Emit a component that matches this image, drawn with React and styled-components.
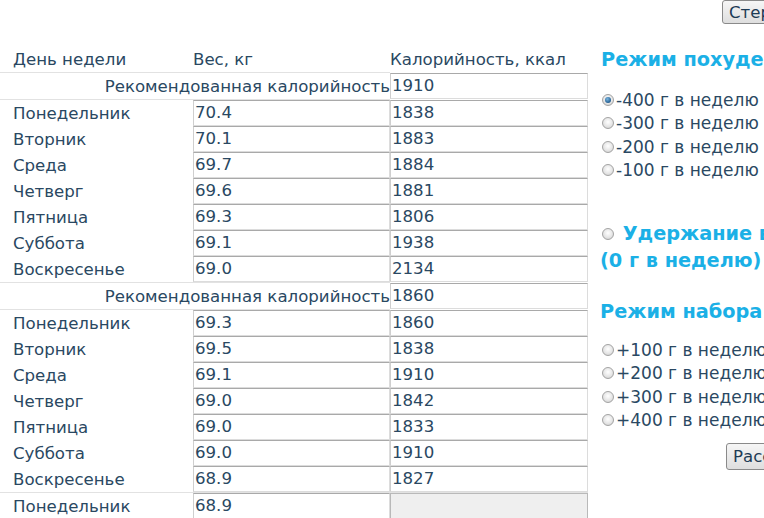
import React from "react";
import styled, { createGlobalStyle } from "styled-components";

const Global = createGlobalStyle`
  html, body { margin: 0; padding: 0; background: #fff; overflow: hidden; }
  body { font-family: "DejaVu Sans", Verdana, sans-serif; font-size: 16.6px; color: #2a4862; }
`;

const Page = styled.div`
  width: 764px;
  height: 518px;
  overflow: hidden;
`;

const TopBar = styled.div`
  display: flex;
  padding-left: 722px;
  height: 46px;
`;

const Button = styled.button`
  flex: none;
  height: ${(p) => p.$h || 24}px;
  padding: 0 6px;
  font-family: "DejaVu Sans", Verdana, sans-serif;
  font-size: 16.6px;
  color: #1d3b55;
  background: linear-gradient(#f6f6f6, #dedede);
  border: 1px solid #8a8a8a;
  border-radius: 3px;
  white-space: nowrap;
`;

const Main = styled.div`
  display: flex;
  gap: 12px;
  width: 900px;
`;

const Table = styled.table`
  border-collapse: collapse;
  border-spacing: 0;
  width: 588px;
  flex: none;
  table-layout: fixed;
`;

const Col = styled.col`
  width: ${(p) => p.$w}px;
`;

const HeadCell = styled.th`
  text-align: left;
  font-weight: normal;
  height: 26px;
  padding: 0 0 0 ${(p) => p.$pl ?? 0}px;
  vertical-align: middle;
  white-space: nowrap;
`;

const Row = styled.tr`
  height: 26px;
`;

const DayCell = styled.td`
  padding: 0 0 0 13px;
  height: 26px;
  white-space: nowrap;
  border-top: ${(p) => (p.$top ? "1px solid #e2e2e2" : "none")};
`;

const RecCell = styled.td`
  text-align: right;
  padding: 0;
  height: 26px;
  border-top: 1px solid #e2e2e2;
  border-bottom: 1px solid #e2e2e2;
  white-space: nowrap;
`;

const InputCell = styled.td`
  padding: 0;
  height: 26px;
  border-top: ${(p) => (p.$top ? "1px solid #e2e2e2" : "none")};
`;

const Field = styled.div`
  box-sizing: border-box;
  width: 100%;
  height: 26px;
  line-height: 24px;
  padding-left: 1px;
  border: 1px solid #dcdcdc;
  border-top-color: #a9a9a9;
  border-left-color: #cfcfcf;
  background: ${(p) => (p.$disabled ? "#efefef" : "#fff")};
  ${(p) => p.$disabled && "border-color: #b9b9b9;"}
  white-space: nowrap;
`;

const Panel = styled.div`
  flex: none;
  width: 260px;
  display: flex;
  flex-direction: column;
`;

const Heading = styled.div`
  font-weight: bold;
  font-size: 19.3px;
  color: #1bb0e6;
  line-height: 27px;
  margin: ${(p) => p.$m || "0"};
  white-space: nowrap;
`;

const Options = styled.div`
  display: flex;
  flex-direction: column;
  margin: ${(p) => p.$m || "0"};
  font-size: 17px;
`;

const Option = styled.label`
  display: flex;
  align-items: center;
  height: 23.5px;
  white-space: nowrap;
`;

const Radio = styled.span`
  box-sizing: border-box;
  display: inline-block;
  flex: none;
  width: 12px;
  height: 12px;
  margin: 0 2px 0 2px;
  border-radius: 50%;
  border: 1px solid #a3a3a3;
  background: radial-gradient(circle at 50% 40%, #ffffff 0%, #e6e6e6 55%, #c9c9c9 100%);
  position: relative;
  vertical-align: middle;
  &::after {
    content: "";
    display: ${(p) => (p.$checked ? "block" : "none")};
    position: absolute;
    left: 2px;
    top: 2px;
    width: 6px;
    height: 6px;
    border-radius: 50%;
    background: radial-gradient(circle at 40% 35%, #7ab6e0 0%, #245f92 70%, #1b3f63 100%);
  }
`;

const HoldLine = styled.div`
  display: flex;
  align-items: center;
  white-space: nowrap;
`;

const ButtonRow = styled.div`
  display: flex;
  padding-left: 126px;
  margin-top: 11px;
`;

const week1 = [
  ["Понедельник", "70.4", "1838"],
  ["Вторник", "70.1", "1883"],
  ["Среда", "69.7", "1884"],
  ["Четверг", "69.6", "1881"],
  ["Пятница", "69.3", "1806"],
  ["Суббота", "69.1", "1938"],
  ["Воскресенье", "69.0", "2134"],
];
const week2 = [
  ["Понедельник", "69.3", "1860"],
  ["Вторник", "69.5", "1838"],
  ["Среда", "69.1", "1910"],
  ["Четверг", "69.0", "1842"],
  ["Пятница", "69.0", "1833"],
  ["Суббота", "69.0", "1910"],
  ["Воскресенье", "68.9", "1827"],
];

const lose = ["-400 г в неделю", "-300 г в неделю", "-200 г в неделю", "-100 г в неделю"];
const gain = ["+100 г в неделю", "+200 г в неделю", "+300 г в неделю", "+400 г в неделю"];

function Week({ rec, days }) {
  return (
    <>
      <Row>
        <RecCell colSpan={2}>Рекомендованная калорийность</RecCell>
        <InputCell>
          <Field>{rec}</Field>
        </InputCell>
      </Row>
      {days.map(([d, w, c]) => (
        <Row key={d}>
          <DayCell>{d}</DayCell>
          <InputCell>
            <Field>{w}</Field>
          </InputCell>
          <InputCell>
            <Field>{c}</Field>
          </InputCell>
        </Row>
      ))}
    </>
  );
}

export default function App() {
  return (
    <Page>
      <Global />
      <TopBar>
        <Button>Стереть</Button>
      </TopBar>
      <Main>
        <Table>
          <colgroup>
            <Col $w={193} />
            <Col $w={197} />
            <Col $w={198} />
          </colgroup>
          <tbody>
            <tr>
              <HeadCell $pl={13}>День недели</HeadCell>
              <HeadCell>Вес, кг</HeadCell>
              <HeadCell>Калорийность, ккал</HeadCell>
            </tr>
            <Week rec="1910" days={week1} />
            <Week rec="1860" days={week2} />
            <Row>
              <DayCell $top>Понедельник</DayCell>
              <InputCell $top>
                <Field>68.9</Field>
              </InputCell>
              <InputCell $top>
                <Field $disabled />
              </InputCell>
            </Row>
          </tbody>
        </Table>
        <Panel>
          <Heading $m="0 0 0 1px">Режим похудения</Heading>
          <Options $m="15px 0 0 0">
            {lose.map((t, i) => (
              <Option key={t}>
                <Radio $checked={i === 0} />
                {t}
              </Option>
            ))}
          </Options>
          <Heading $m="38px 0 0 0">
            <HoldLine>
              <Radio />
              &nbsp;Удержание веса
            </HoldLine>
            (0 г в неделю)
          </Heading>
          <Heading $m="24px 0 0 0">Режим набора</Heading>
          <Options $m="13px 0 0 0">
            {gain.map((t) => (
              <Option key={t}>
                <Radio />
                {t}
              </Option>
            ))}
          </Options>
          <ButtonRow>
            <Button $h={27}>Рассчитать</Button>
          </ButtonRow>
        </Panel>
      </Main>
    </Page>
  );
}
